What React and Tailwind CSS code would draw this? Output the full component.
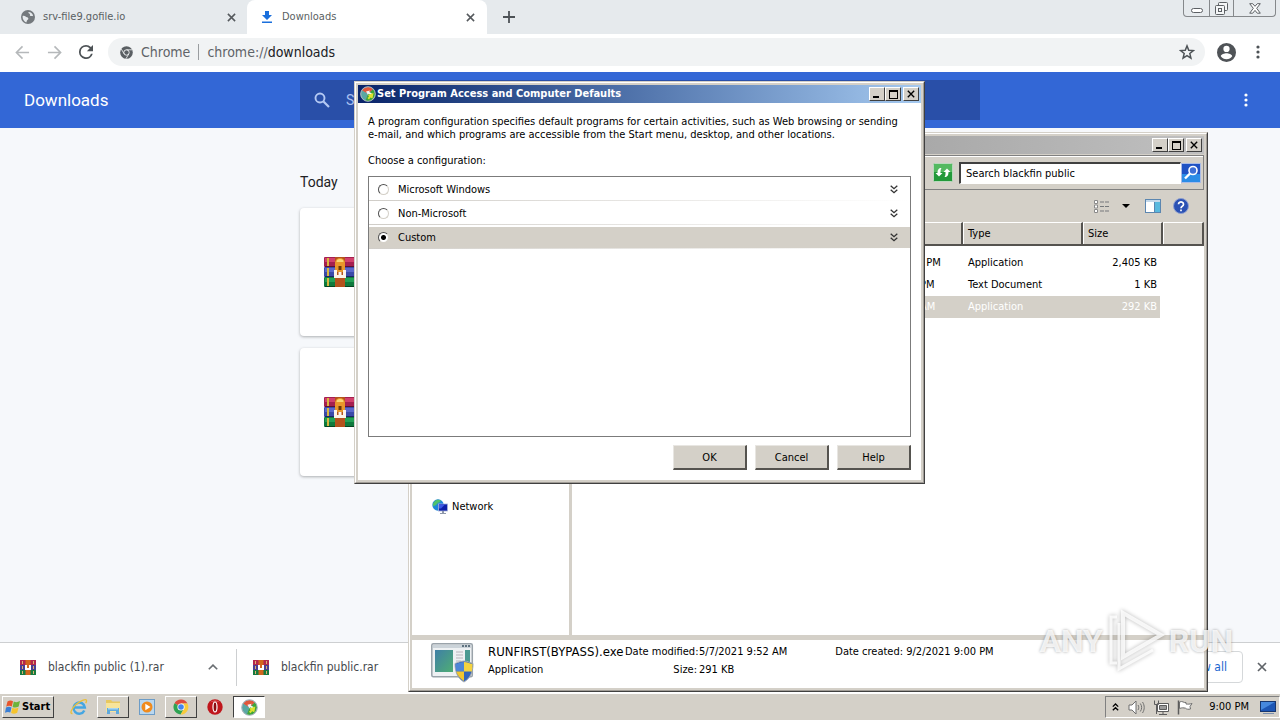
import { useState } from 'react'

const CloseIcon = ({ className }) => (
  <svg viewBox="0 0 10 10" className={className} fill="none" stroke="currentColor" strokeWidth="1.7" aria-hidden>
    <path d="M1 1l8 8M9 1l-8 8" />
  </svg>
)

const GlobeIcon = () => (
  <svg viewBox="0 0 14 14" className="h-[14px] w-[14px]" aria-hidden>
    <circle cx="7" cy="7" r="7" fill="#74797d" />
    <path d="M1.600 6c1-.4 2.300-.2 3 .6.8.8 2.200.6 2.700 1.700.4 1-.8 1.500-1.300 2.300-.4.8-.2 1.500-.8 1.900C3 11.600 1.300 9.200 1.600 6zM7.500 2c-.4 1.200.6 1.400 1.300 1.900.6.6-.4 1.300.4 1.900.8.5 1.700-.2 2.900.4C12 4 10 2 7.500 2z" fill="#e6eaed" />
  </svg>
)

const DownloadTabIcon = () => (
  <svg viewBox="0 0 12 14" className="h-[14px] w-3" fill="#1a6fdc" aria-hidden>
    <path d="M4 1h4v4h3L6 10 1 5h3zM1 11.500h10V13H1z" />
  </svg>
)

const MoreIcon = ({ className }) => (
  <svg viewBox="0 0 4 14" className={className} fill="currentColor" aria-hidden>
    <circle cx="2" cy="2" r="1.600" />
    <circle cx="2" cy="7" r="1.600" />
    <circle cx="2" cy="12" r="1.600" />
  </svg>
)

const ArrowIcon = ({ className }) => (
  <svg viewBox="0 0 16 16" className={className} fill="none" stroke="currentColor" strokeWidth="1.700" aria-hidden>
    <path d="M15 8H2M8 1.500L1.500 8 8 14.500" />
  </svg>
)

const ReloadIcon = () => (
  <svg viewBox="4 4 16 16" className="h-[14px] w-[14px]" fill="#4d5256" aria-hidden>
    <path d="M17.650 6.350A7.950 7.950 0 0 0 12 4a8 8 0 1 0 7.730 10h-2.080A6 6 0 1 1 12 6c1.660 0 3.140.69 4.220 1.780L13 11h7V4z" />
  </svg>
)

const ChromeMonoIcon = () => (
  <svg viewBox="0 0 14 14" className="h-[13px] w-[13px]" aria-hidden>
    <circle cx="7" cy="7" r="6.800" fill="#5a5f63" />
    <circle cx="7" cy="7" r="2.900" fill="none" stroke="#f1f3f4" />
    <path d="M7 4.100h6M4.500 8.500L1.400 3.300M9.500 8.500l-3.100 5.200" stroke="#f1f3f4" strokeWidth=".9" />
  </svg>
)

const StarIcon = () => (
  <svg viewBox="0 0 24 24" className="h-4 w-4" fill="none" stroke="#4d5256" strokeWidth="2.200" aria-hidden>
    <path d="M12 2.800l2.600 6.500 7 .5-5.400 4.500 1.700 6.800-5.900-3.700-5.900 3.700 1.700-6.800L2.400 9.800l7-.5z" />
  </svg>
)

const ProfileIcon = () => (
  <svg viewBox="2 2 20 20" className="h-[19px] w-[19px]" fill="#4f5357" aria-hidden>
    <path d="M12 2a10 10 0 1 0 0 20 10 10 0 0 0 0-20zm0 3a3.300 3.300 0 1 1 0 6.600A3.300 3.300 0 0 1 12 5zm0 14.200a7.200 7.200 0 0 1-6-3.220c.03-1.990 4-3.080 6-3.080s5.970 1.090 6 3.080a7.200 7.200 0 0 1-6 3.220z" />
  </svg>
)

const SearchIcon = () => (
  <svg viewBox="0 0 16 16" className="h-4 w-4" fill="none" stroke="#b4c9f3" strokeWidth="1.900" aria-hidden>
    <circle cx="6" cy="6" r="4.500" />
    <path d="M9.500 9.500l5.500 5.500" strokeWidth="2.200" />
  </svg>
)

const RarIcon = ({ className }) => (
  <svg viewBox="0 0 32 30" className={className} aria-hidden>
    <rect x="0" y="0" width="32" height="10" rx="1" fill="#a5204f" />
    <rect x="1" y="1" width="31" height="4" fill="#d1406c" />
    <rect x="1" y="9" width="31" height="1" fill="#5e1030" />
    <rect x="0" y="10" width="32" height="10" rx="1" fill="#3b4aa8" />
    <rect x="1" y="11" width="31" height="4" fill="#5a68cc" />
    <rect x="1" y="19" width="31" height="1" fill="#1b2468" />
    <rect x="0" y="20" width="32" height="10" rx="1" fill="#0f7a3d" />
    <rect x="1" y="21" width="31" height="4" fill="#23a055" />
    <rect x="1" y="29" width="31" height="1" fill="#06431f" />
    <path d="M3 1h2v8H3zM3 11h2v8H3zM3 21h2v8H3z" fill="#d9b53f" />
    <rect x="11" y="0" width="10" height="30" fill="#b4521d" />
    <path d="M11 15V6a5 5 0 0 1 10 0v9z" fill="#e9962a" />
    <path d="M12.500 5a3.500 3 0 0 1 7 0z" fill="#f9d774" />
    <rect x="14.500" y="9" width="3" height="4" fill="#6a3508" />
    <path d="M10 13h3v5h1.500v-3h3v3H19v-5h3v8H10z" fill="#fdf3ea" />
  </svg>
)

const SmallRarIcon = () => (
  <svg viewBox="0 0 16 15" className="h-[15px] w-4" aria-hidden>
    <rect width="16" height="5" fill="#b3274d" />
    <rect y="5" width="16" height="5" fill="#4a3f93" />
    <rect y="10" width="16" height="5" fill="#177a3f" />
    <path d="M2 1h1v3H2zM2 6h1v3H2zM2 11h1v3H2zM13 1h1v3h-1zM13 6h1v3h-1zM13 11h1v3h-1z" fill="#e0b070" />
    <rect x="5.500" width="5" height="15" fill="#d2661f" />
    <path d="M5 5h2v3h2V5h2v5H5z" fill="#fff" />
  </svg>
)

const DefaultsIcon = ({ className }) => (
  <svg viewBox="0 0 16 16" className={className} aria-hidden>
    <circle cx="8" cy="8" r="7.600" fill="#8e9ba8" />
    <path d="M8 8L2 4.500A7 7 0 0 1 13 3.200z" fill="#e2573b" />
    <path d="M8 8L2 4.500A7 7 0 0 0 5.500 14.500z" fill="#5aa7a3" />
    <path d="M8 8l5-4.800a7 7 0 0 1-7.500 11.300z" fill="#3ea63a" />
    <path d="M6 5.500l4-1-.8 1.500 2.800 1.500-1 1.500-2.500-1.200-.5 1.200z" fill="#f2f6f4" />
    <path d="M8 9l5.500-2-1 5.500-2-1-1.500 2-1.500-1.500 1.500-1.500z" fill="#dfe22f" />
    <circle cx="8" cy="8" r="7.300" fill="none" stroke="#b4c2c6" strokeWidth=".8" />
  </svg>
)

const DoubleChevron = () => (
  <svg viewBox="0 0 8 9" className="h-[9px] w-2" fill="none" stroke="#333" strokeWidth="1.300" aria-hidden>
    <path d="M.7.700L4 3.700 7.300.700M.7 4.700L4 7.700l3.300-3" />
  </svg>
)

const RefreshPairIcon = () => (
  <svg viewBox="0 0 20 19" className="h-[19px] w-5" aria-hidden>
    <rect x=".5" y=".5" width="19" height="18" rx="1" fill="#23993a" stroke="#b9d9bd" />
    <rect x="1" y="1" width="18" height="8" fill="#54b960" />
    <path d="M2.500 10L6 13.500 9.500 10H7.500c0-2.500 0-3.500 1-5C5.500 5 4.500 7 4.500 10zM17.500 9L14 5.500 10.500 9h2c0 2.500 0 3.500-1 5 3 0 4-2 4-5z" fill="#fff" />
  </svg>
)

const MagnifierIcon = () => (
  <svg viewBox="0 0 20 20" className="h-5 w-5" aria-hidden>
    <rect x=".5" y=".5" width="19" height="19" fill="#1f52c4" stroke="#a9bbe6" />
    <rect x="1" y="11" width="18" height="8" fill="#2b8ce6" />
    <circle cx="12" cy="7.500" r="4" fill="#3d6fd6" stroke="#fff" strokeWidth="1.600" />
    <path d="M9 10.500L4 15.500" stroke="#fff" strokeWidth="2.400" />
  </svg>
)

const ViewListIcon = () => (
  <svg viewBox="0 0 16 13" className="h-[13px] w-4" fill="none" aria-hidden>
    <path d="M.5.500h3v3h-3zM.5 5h3v3h-3zM.5 9.500h3v3h-3z" fill="#fff" stroke="#8a8a8a" />
    <path d="M6 2h4M11 2h4M6 6.500h4M11 6.500h4M6 11h4M11 11h4" stroke="#76797c" />
  </svg>
)

const PreviewPaneIcon = () => (
  <svg viewBox="0 0 16 14" className="h-[14px] w-4" aria-hidden>
    <rect x=".5" y=".5" width="15" height="13" fill="#fff" stroke="#5b86b0" />
    <rect x="1" y="1" width="14" height="2" fill="#c5d9ea" />
    <rect x="10" y="3" width="5" height="10" fill="#59b9de" />
    <path d="M9.500 3v10" stroke="#5b86b0" />
  </svg>
)

const NetworkIcon = () => (
  <svg viewBox="0 0 16 16" className="h-4 w-4" aria-hidden>
    <circle cx="6" cy="6" r="5.700" fill="#1e86d8" />
    <path d="M2 3c2-2.500 5-2.600 7-1.500-1 2.500-3 1.500-4 3.500-.8 1.500-2 1-3.500 2.500C.5 6 1 4.300 2 3z" fill="#4fc26b" />
    <rect x="6.500" y="5" width="9" height="7" fill="#0d1fa8" stroke="#a9b5d8" strokeWidth=".8" />
    <path d="M7 5.500h6l-4 4H7z" fill="#3b58e6" />
    <path d="M10 12h2v2h2v1H8v-1h2z" fill="#8f98ab" />
  </svg>
)

const ExeIcon = () => (
  <svg viewBox="0 0 44 40" className="h-10 w-11" aria-hidden>
    <defs>
      <linearGradient id="exe-pane" x1="0" y1="0" x2="1" y2="1">
        <stop offset="0" stopColor="#3f7fa6" />
        <stop offset="1" stopColor="#4fae74" />
      </linearGradient>
    </defs>
    <rect x=".8" y=".8" width="40.500" height="33" rx="1.500" fill="#eef1f3" stroke="#9aa3aa" strokeWidth="1.500" />
    <path d="M2 2h38v3H2z" fill="#cbd3d9" />
    <path d="M31 2h2v2h-2zM34 2h2v2h-2zM37 2h2v2h-2z" fill="#5f7280" />
    <rect x="4" y="7" width="18" height="22" fill="url(#exe-pane)" />
    <path d="M25 9h7M25 12h7M25 15h7M25 18h5M25 21h5" stroke="#b8b4bb" />
    <rect x="34" y="7" width="5" height="20" fill="#4a9a92" />
    <path d="M33 18c3 0 6 1.500 9 2.500 0 9-3 15-9 18.500-6-3.500-9-9.500-9-18.500 3-1 6-2.500 9-2.500z" fill="#3465b8" stroke="#a5abb3" />
    <path d="M33 19v9.500h-7.800c-.5-2.400-.7-4.800-.7-7.500 3-.7 5.500-2 8.500-2z" fill="#4e86d6" />
    <path d="M33 19v9.500h7.800c.5-2.400.7-4.800.7-7.500-3-.7-5.500-2-8.500-2z" fill="#f5d33f" />
    <path d="M33 28.500V38c-4-2.500-6.500-5.500-7.800-9.500z" fill="#f2c52e" />
  </svg>
)

const FlagLogo = () => (
  <svg viewBox="0 0 16 16" className="h-4 w-4" aria-hidden>
    <path d="M2.500 2.500c2-1.400 3.800-1.200 5.500-.3L6.800 7.500C5 6.600 3.300 6.500 1.200 7.700z" fill="#e8552b" />
    <path d="M8.800 2.600c2 .9 3.800.8 6.200-.5l-1.300 5.400c-2.200 1.200-4.100 1.300-6.100.4z" fill="#6db33a" />
    <path d="M1 8.600c2-1.200 3.700-1.100 5.500-.2L5.300 13.500c-1.800-.9-3.400-.8-5.300.3z" fill="#3a7fd5" />
    <path d="M7.300 8.800c2 .9 3.900.8 6.200-.4l-1.300 5.300c-2.200 1.200-4.100 1.200-6.100.3z" fill="#f6c42d" />
  </svg>
)

const IeIcon = () => (
  <svg viewBox="0 0 18 18" className="h-[18px] w-[18px]" fill="none" aria-hidden>
    <path d="M14.300 12.500A5.600 5.600 0 1 1 14.800 9.500H4.500" stroke="#45a6e2" strokeWidth="2.500" />
    <path d="M2.500 15.500C-.5 16 1 11 6 6.500S16.500.500 16.500 2.500c.1.900-.3 1.800-.8 2.600" stroke="#e9bf3c" strokeWidth="1.400" />
  </svg>
)

const FolderIcon = () => (
  <svg viewBox="0 0 18 16" className="h-4 w-[18px]" aria-hidden>
    <path d="M2 1h5l1.500 1.500H16V13H2z" fill="#e8c860" />
    <path d="M2 4h14v9H2z" fill="#f7e49a" />
    <path d="M3 9h12v6h-3v-3H6v3H3z" fill="#5fa9dc" />
    <path d="M4 9h10v1.500H4z" fill="#a6d5f2" />
  </svg>
)

const MediaIcon = () => (
  <svg viewBox="0 0 16 16" className="h-4 w-4" aria-hidden>
    <rect x=".5" y=".5" width="15" height="15" fill="#b9d7ef" stroke="#6c9cc7" />
    <circle cx="8" cy="8" r="5.500" fill="#f08b1d" />
    <path d="M6.300 4.700v6.600L11.500 8z" fill="#fff" />
  </svg>
)

const ChromeIcon = () => (
  <svg viewBox="0 0 16 16" className="h-4 w-4" aria-hidden>
    <path d="M8 8L1.500 4.200A7.500 7.500 0 0 1 14.500 4.500H8z" fill="#dd4b3e" />
    <path d="M8 8l-6.500-3.800A7.500 7.500 0 0 0 7.600 15.500L11 9.800z" fill="#2fa352" />
    <path d="M8 4.500h6.500A7.500 7.500 0 0 1 7.600 15.500L11 9.800z" fill="#f8cb3b" />
    <circle cx="8" cy="8" r="3.600" fill="#fff" />
    <circle cx="8" cy="8" r="2.800" fill="#4385ee" />
  </svg>
)

const OperaIcon = () => (
  <svg viewBox="0 0 16 16" className="h-4 w-4" aria-hidden>
    <circle cx="8" cy="8" r="7.700" fill="#c0161c" />
    <path d="M3 3.500a7 7 0 0 1 10 0A12 12 0 0 0 3 3.500z" fill="#e8777a" />
    <ellipse cx="8" cy="8" rx="2" ry="5" fill="#8c0b10" stroke="#fff" strokeWidth="1.200" />
  </svg>
)

const SpeakerIcon = () => (
  <svg viewBox="0 0 17 15" className="h-[15px] w-[17px]" fill="none" stroke="#6f6f6f" aria-hidden>
    <path d="M1 5h3l4-4v13l-4-4H1z" fill="#fff" />
    <path d="M10 5c1 1.500 1 3.500 0 5M12.300 3.500c1.800 2.500 1.800 5.500 0 8M14.500 2c2.300 3.500 2.300 7.500 0 11" />
  </svg>
)

const LanIcon = () => (
  <svg viewBox="0 0 17 15" className="h-[15px] w-[17px]" fill="none" stroke="#5c5c5c" aria-hidden>
    <path d="M4.500 3.500h11v8h-11z" fill="#fff" />
    <path d="M6.500 5.500h7v4h-7z" fill="#9a9a9a" />
    <path d="M1.500.500v4h4v-4M3.500 4.500v9.500M6 14.500h8M10 12v2" />
  </svg>
)

const FlagIcon = () => (
  <svg viewBox="0 0 16 15" className="h-[15px] w-4" aria-hidden>
    <path d="M1.500.500v14" stroke="#5c5c5c" strokeWidth="1.500" />
    <path d="M2.500 2c3-1.500 4 1 6.500.5V4c2 .3 3.500.2 6-.5l-2 3 .5 2.500c-2 .5-4 .3-5-.8-2-.4-3.500-.7-6 .3z" fill="#fff" stroke="#6f6f6f" />
  </svg>
)

const DesktopIcon = () => (
  <svg viewBox="0 0 16 13" className="h-[13px] w-4" aria-hidden>
    <rect x=".5" y=".5" width="15" height="10" fill="#1d56b4" stroke="#17366e" />
    <path d="M1 1h14L1 9z" fill="#4688dd" />
    <path d="M3 12h11v1H3z" fill="#7a8fae" />
  </svg>
)

const raised = 'border border-t-white border-l-white border-r-[#404040] border-b-[#404040] bg-[#d4d0c8]'

const WindowFrame = ({ label, className, children }) => (
  <section
    aria-label={label}
    className={`absolute flex flex-col border border-t-[#d4d0c8] border-l-[#d4d0c8] border-r-[#404040] border-b-[#404040] ${className}`}
  >
    <div className="flex flex-1 flex-col border border-t-white border-l-white border-r-[#a09c96] border-b-[#a09c96] bg-[#d4d0c8] p-[2px]">
      {children}
    </div>
  </section>
)

const CaptionButtons = () => (
  <div className="flex pr-[2px]">
    <button type="button" aria-label="Minimize" className={`flex h-[14px] w-4 items-end pb-[2px] pl-[3px] ${raised}`}>
      <span className="h-[2px] w-[6px] bg-black" />
    </button>
    <button type="button" aria-label="Maximize" className={`flex h-[14px] w-4 items-center justify-center ${raised}`}>
      <span className="h-[9px] w-[9px] border border-t-2 border-black" />
    </button>
    <button type="button" aria-label="Close" className={`ml-[2px] flex h-[14px] w-4 items-center justify-center ${raised}`}>
      <CloseIcon className="h-2 w-2 text-black" />
    </button>
  </div>
)

const BrowserTabs = () => (
  <div className="flex h-[34px] shrink-0 items-stretch bg-[#e6eaed] text-[11px] text-[#5a5f63]">
    <div className="flex w-[247px] items-center pr-[10px] pl-[21px]">
      <GlobeIcon />
      <span className="ml-2 flex-1">srv-file9.gofile.io</span>
      <button type="button" aria-label="Close tab" className="p-[1px]">
        <CloseIcon className="h-[9px] w-[9px] text-[#55595d]" />
      </button>
    </div>
    <div className="flex w-60 items-center rounded-t-lg bg-white pr-[11px] pl-[14px]">
      <DownloadTabIcon />
      <span className="ml-[9px] flex-1">Downloads</span>
      <button type="button" aria-label="Close tab" className="p-[1px]">
        <CloseIcon className="h-[9px] w-[9px] text-[#55595d]" />
      </button>
    </div>
    <button type="button" aria-label="New tab" className="ml-4 self-center">
      <svg viewBox="0 0 12 12" className="h-3 w-3" stroke="#4d5256" strokeWidth="1.800" aria-hidden>
        <path d="M6 0v12M0 6h12" />
      </svg>
    </button>
    <div className="mr-1 ml-auto flex h-[17px] rounded-b border border-t-0 border-[#85888b]">
      <button type="button" aria-label="Minimize" className="flex w-[25px] items-end justify-center pb-[3px]">
        <span className="h-[5px] w-3 rounded-sm border border-[#5c6064] bg-white" />
      </button>
      <button type="button" aria-label="Restore" className="flex w-[25px] items-center justify-center border-x border-[#85888b]">
        <svg viewBox="0 0 13 13" className="h-[13px] w-[13px]" fill="#f4f6f7" stroke="#5c6064" aria-hidden>
          <rect x="3.500" y=".5" width="9" height="8" rx="1" />
          <rect x=".5" y="3.500" width="9" height="9" rx="1" />
          <rect x="3.500" y="6.500" width="3" height="3" />
        </svg>
      </button>
      <button type="button" aria-label="Close" className="flex w-[41px] items-center justify-center">
        <svg viewBox="0 0 12 11" className="h-[11px] w-3" fill="#fff" stroke="#5c6064" aria-hidden>
          <path d="M.7.700h3L6 3.300 8.300.700h3L7.700 5.300l3.600 4.900h-3L6 7.400 3.700 10.200h-3l3.600-4.900z" />
        </svg>
      </button>
    </div>
  </div>
)

const BrowserToolbar = () => (
  <div className="flex h-[38px] shrink-0 items-center bg-white pb-[2px] pl-[15px]">
    <button type="button" aria-label="Back" className="w-4 text-[#b5b8ba]"><ArrowIcon className="h-[15px] w-[15px]" /></button>
    <button type="button" aria-label="Forward" className="ml-4 w-4 text-[#b5b8ba]"><ArrowIcon className="h-[15px] w-[15px] rotate-180" /></button>
    <button type="button" aria-label="Reload" className="ml-4 w-4"><ReloadIcon /></button>
    <div className="ml-[13px] flex h-7 flex-1 items-center rounded-full bg-[#f1f3f4] pr-[10px] pl-3 text-sm text-[#5f6368]">
      <ChromeMonoIcon />
      <span className="ml-2">Chrome</span>
      <span className="mx-2 h-4 w-px bg-[#9a9da0]" />
      <span>chrome://<span className="text-[#202124]">downloads</span></span>
      <button type="button" aria-label="Bookmark this page" className="ml-auto"><StarIcon /></button>
    </div>
    <button type="button" aria-label="Profile" className="ml-3"><ProfileIcon /></button>
    <button type="button" aria-label="Chrome menu" className="mr-5 ml-5 text-[#4d5256]"><MoreIcon className="h-[14px] w-1" /></button>
  </div>
)

const DownloadsPage = () => (
  <>
    <header className="flex h-14 shrink-0 items-center bg-[#3367d6] font-[Roboto,sans-serif]">
      <h1 className="flex-1 px-6 text-[17px] text-white">Downloads</h1>
      <label className="flex h-10 w-full max-w-[680px] items-center gap-4 bg-[#294fa8] px-[14px]">
        <SearchIcon />
        <input
          type="search"
          aria-label="Search downloads"
          placeholder="Search downloads"
          className="flex-1 bg-transparent text-sm text-white outline-none placeholder:text-[#a9c0f0]"
        />
      </label>
      <div className="flex flex-1 justify-end pr-8 pl-4 text-white">
        <button type="button" aria-label="More actions"><MoreIcon className="h-[14px] w-1" /></button>
      </div>
    </header>
    <main className="flex-1 bg-[#f6f8fb] pt-11">
      <div className="mx-auto flex max-w-[680px] flex-col gap-3 font-[Roboto,sans-serif]">
        <h2 className="mb-1 text-sm text-[#202124]">Today</h2>
        <article className="flex h-32 items-center rounded bg-white px-6 shadow-[0_1px_3px_rgba(60,64,67,0.4)]">
          <RarIcon className="h-[30px] w-8" />
        </article>
        <article className="flex h-32 items-center rounded bg-white px-6 shadow-[0_1px_3px_rgba(60,64,67,0.4)]">
          <RarIcon className="h-[30px] w-8" />
        </article>
      </div>
    </main>
  </>
)

const DownloadShelf = () => (
  <footer className="flex h-[51px] shrink-0 items-center border-t border-[#cdcfd1] bg-white pb-[2px] text-xs text-[#45494d]">
    <div className="flex h-[37px] w-[237px] items-center border-r border-[#cdcfd1] pr-[18px] pl-5">
      <SmallRarIcon />
      <span className="ml-3 flex-1">blackfin public (1).rar</span>
      <button type="button" aria-label="Download options">
        <svg viewBox="0 0 10 6" className="h-[6px] w-[10px]" fill="none" stroke="#6a6e72" strokeWidth="1.600" aria-hidden>
          <path d="M.8 5.300L5 1.100l4.200 4.200" />
        </svg>
      </button>
    </div>
    <div className="flex items-center pl-4">
      <SmallRarIcon />
      <span className="ml-3">blackfin public.rar</span>
    </div>
    <button type="button" className="ml-auto h-8 rounded border border-[#d5d8da] px-[15px] text-[#1a66cf]">Show all</button>
    <button type="button" aria-label="Close downloads bar" className="mr-[13px] ml-[14px]">
      <CloseIcon className="h-[10px] w-[10px] text-[#5f6368]" />
    </button>
  </footer>
)

const files = [
  { modified: '9/2/2021 12:00 PM', type: 'Application', size: '2,405 KB' },
  { modified: '9/2/2021 9:00 PM', type: 'Text Document', size: '1 KB' },
  { modified: '5/7/2021 9:52 AM', type: 'Application', size: '292 KB', selected: true },
]

const headCell = 'border-t border-r-2 border-b-2 border-t-white border-r-[#55534f] border-b-[#55534f] pl-[5px] font-normal shadow-[inset_1px_0_0_#fff]'

const ExplorerWindow = () => (
  <WindowFrame label="blackfin public" className="top-[132px] left-[408px] h-[560px] w-[800px]">
    <div className="flex h-[18px] shrink-0 items-center justify-end bg-linear-to-r from-[#808080] to-[#c0c0c0]">
      <CaptionButtons />
    </div>
    <div className="mt-px flex h-[35px] shrink-0 items-center justify-end border border-[#808080] pr-[2px] shadow-[inset_1px_1px_0_#fff]">
      <button type="button" aria-label="Refresh"><RefreshPairIcon /></button>
      <input
        type="text"
        aria-label="Search blackfin public"
        defaultValue="Search blackfin public"
        className="ml-[6px] h-[22px] w-[222px] border border-t-2 border-l-2 border-t-[#404040] border-l-[#404040] border-r-white border-b-white bg-white px-[5px]"
      />
      <button type="button" aria-label="Search"><MagnifierIcon /></button>
    </div>
    <div className="flex h-8 shrink-0 items-center justify-end pr-[15px]">
      <button type="button" aria-label="Change your view"><ViewListIcon /></button>
      <button type="button" aria-label="More options" className="ml-3">
        <svg viewBox="0 0 8 4" className="h-1 w-2" aria-hidden><path d="M0 0h8L4 4z" /></svg>
      </button>
      <button type="button" aria-label="Show the preview pane" className="ml-[15px]"><PreviewPaneIcon /></button>
      <button type="button" aria-label="Get help" className="ml-3">
        <svg viewBox="0 0 16 16" className="h-4 w-4" aria-hidden>
          <circle cx="8" cy="8" r="7.500" fill="#2a51b4" stroke="#8d9ed0" />
          <path d="M5.500 6.200a2.500 2.300 0 1 1 3.800 2Q8 9 8 10.200M8 11.600v1.600" fill="none" stroke="#fff" strokeWidth="1.700" />
        </svg>
      </button>
    </div>
    <div className="flex flex-1 bg-white">
      <nav className="w-[157px] pt-[277px] pl-5">
        <a href="#network" className="flex items-center gap-1"><NetworkIcon />Network</a>
      </nav>
      <div className="w-[3px] bg-[#d4d0c8]" />
      <div className="flex-1">
        <table className="w-full table-fixed border-separate border-spacing-0">
          <colgroup>
            <col />
            <col className="w-[120px]" />
            <col className="w-[120px]" />
            <col className="w-[80px]" />
            <col className="w-[41px]" />
          </colgroup>
          <thead>
            <tr className="h-6 bg-[#d4d0c8] text-left">
              <th className={headCell} />
              <th className={headCell} />
              <th className={headCell}>Type</th>
              <th className={headCell}>Size</th>
              <th className={headCell} />
            </tr>
          </thead>
          <tbody>
            <tr className="h-[6px]"><td colSpan={5} /></tr>
            {files.map((file, i) => (
              <tr key={i} className={file.selected ? 'h-[22px] text-white' : 'h-[22px]'}>
                <td className={file.selected ? 'bg-[#d4d0c8]' : ''} />
                <td className={file.selected ? 'bg-[#d4d0c8] pl-1 whitespace-nowrap' : 'pl-1 whitespace-nowrap'}>{file.modified}</td>
                <td className={file.selected ? 'bg-[#d4d0c8] pl-[5px]' : 'pl-[5px]'}>{file.type}</td>
                <td className="pr-[3px]">
                  <div className={file.selected ? 'bg-[#d4d0c8] pr-[3px] text-right leading-[22px]' : 'pr-[3px] text-right leading-[22px]'}>{file.size}</div>
                </td>
                <td />
              </tr>
            ))}
          </tbody>
        </table>
      </div>
    </div>
    <div className="flex h-[53px] shrink-0 border-t-[5px] border-[#d4d0c8] bg-white pt-[3px] pl-[19px]">
      <ExeIcon />
      <div className="ml-[13px] grid grid-cols-[135px_72px_auto] grid-rows-[18px_18px] items-center gap-x-[2px] whitespace-nowrap">
        <span className="text-[13px]">RUNFIRST(BYPASS).exe</span>
        <span className="text-right">Date modified:</span>
        <span>5/7/2021 9:52 AM</span>
        <span>Application</span>
        <span className="text-right">Size:</span>
        <span>291 KB</span>
      </div>
      <div className="ml-12 leading-[18px]">Date created: 9/2/2021 9:00 PM</div>
    </div>
  </WindowFrame>
)

const options = ['Microsoft Windows', 'Non-Microsoft', 'Custom']

const DefaultsDialog = () => {
  const [selected, setSelected] = useState('Custom')

  return (
    <WindowFrame label="Set Program Access and Computer Defaults" className="top-[81px] left-[354px] w-[571px]">
      <div className="flex h-[18px] items-center justify-between bg-linear-to-r from-[#0a246a] to-[#a6caf0]">
        <div className="flex items-center gap-px pl-[2px] font-bold text-white">
          <DefaultsIcon className="h-4 w-4" />
          Set Program Access and Computer Defaults
        </div>
        <CaptionButtons />
      </div>
      <div className="bg-white px-[10px] pt-3 pb-[10px] leading-[13px]">
        <p className="whitespace-nowrap">
          A program configuration specifies default programs for certain activities, such as Web browsing or sending
          <br />
          e-mail, and which programs are accessible from the Start menu, desktop, and other locations.
        </p>
        <p className="mt-[13px]">Choose a configuration:</p>
        <div role="radiogroup" aria-label="Choose a configuration" className="mt-[9px] h-[261px] border border-[#7b7b7b]">
          {options.map((option) => (
            <div key={option} className="flex h-6 flex-col">
              <label className={option === selected ? 'mt-[2px] flex h-[21px] shrink-0 items-center bg-[#d4d0c8] pr-3 pl-[9px]' : 'mt-[2px] flex h-[21px] shrink-0 items-center pr-3 pl-[9px]'}>
                <input
                  type="radio"
                  name="configuration"
                  checked={option === selected}
                  onChange={() => setSelected(option)}
                  className="h-[11px] w-[11px] appearance-none rounded-full border border-t-[#505050] border-l-[#505050] border-r-[#d4d0c8] border-b-[#d4d0c8] bg-white checked:bg-[radial-gradient(circle,#000_2px,#fff_3px)]"
                />
                <span className="ml-[9px] flex-1">{option}</span>
                <DoubleChevron />
              </label>
              <span className="h-px shrink-0 bg-linear-to-r from-[#d0cdc8] to-white" />
            </div>
          ))}
        </div>
        <div className="mt-2 flex justify-end gap-2">
          {['OK', 'Cancel', 'Help'].map((name) => (
            <button
              key={name}
              type="button"
              className="h-[25px] w-[74px] border border-r-2 border-b-2 border-t-[#e8e6e2] border-l-[#e8e6e2] border-r-[#55534f] border-b-[#55534f] bg-[#d4d0c8]"
            >
              {name}
            </button>
          ))}
        </div>
      </div>
    </WindowFrame>
  )
}

const Taskbar = () => (
  <footer className="flex h-[27px] shrink-0 items-center border-t border-white bg-[#d4d0c8] pl-[2px]">
    <button type="button" className={`flex h-[22px] w-[52px] items-center gap-px pl-[2px] font-bold ${raised}`}>
      <FlagLogo />
      Start
    </button>
    <button type="button" aria-label="Internet Explorer" className="ml-4"><IeIcon /></button>
    <button type="button" aria-label="Windows Explorer" className={`ml-[9px] flex h-[22px] w-8 items-center justify-center ${raised}`}><FolderIcon /></button>
    <button type="button" aria-label="Windows Media Player" className="ml-[10px]"><MediaIcon /></button>
    <button type="button" aria-label="Google Chrome" className={`ml-[10px] flex h-[22px] w-8 items-center justify-center ${raised}`}><ChromeIcon /></button>
    <button type="button" aria-label="Opera" className="ml-[10px]"><OperaIcon /></button>
    <button
      type="button"
      aria-label="Set Program Access and Computer Defaults"
      className="ml-[10px] flex h-[22px] w-8 items-center justify-center border border-t-[#404040] border-l-[#404040] border-r-white border-b-white bg-white"
    >
      <DefaultsIcon className="h-[17px] w-[17px]" />
    </button>
    <div className="ml-auto flex h-[22px] items-center border border-t-[#808080] border-l-[#808080] border-r-white border-b-white pr-[3px] pl-[6px]">
      <button type="button" aria-label="Show hidden icons">
        <svg viewBox="0 0 7 8" className="h-2 w-[7px]" fill="none" stroke="#000" strokeWidth="1.300" aria-hidden>
          <path d="M.8 3.600l2.700-2.600 2.700 2.600M.8 7.300l2.700-2.600 2.700 2.600" />
        </svg>
      </button>
      <span className="ml-[9px]"><SpeakerIcon /></span>
      <span className="ml-2"><LanIcon /></span>
      <span className="ml-[7px]"><FlagIcon /></span>
      <time className="ml-4">9:00 PM</time>
      <button type="button" aria-label="Show desktop" className="ml-[11px]"><DesktopIcon /></button>
    </div>
  </footer>
)

const Watermark = () => (
  <div className="pointer-events-none absolute right-[47px] bottom-[47px] flex items-center gap-1 font-[Roboto,sans-serif] text-[32px] leading-none font-bold text-white/80 [text-shadow:0_0_3px_rgba(0,0,0,0.35)]">
    <span>ANY</span>
    <svg viewBox="0 0 58 64" className="h-16 w-[58px] drop-shadow-[0_0_2px_rgba(0,0,0,0.35)]" fill="none" stroke="#fff" strokeOpacity=".8" strokeWidth="4" aria-hidden>
      <path d="M16 4v44l38-22z" />
      <path d="M10 8H4v46h6M12 14v46l34-19" strokeWidth="3" />
    </svg>
    <span>RUN</span>
  </div>
)

const App = () => (
  <div className="relative flex h-screen flex-col overflow-hidden font-['DejaVu_Sans_Condensed','DejaVu_Sans',sans-serif] text-[11px] leading-4 text-black">
    <BrowserTabs />
    <BrowserToolbar />
    <DownloadsPage />
    <DownloadShelf />
    <Taskbar />
    <ExplorerWindow />
    <DefaultsDialog />
    <Watermark />
  </div>
)

export default App
